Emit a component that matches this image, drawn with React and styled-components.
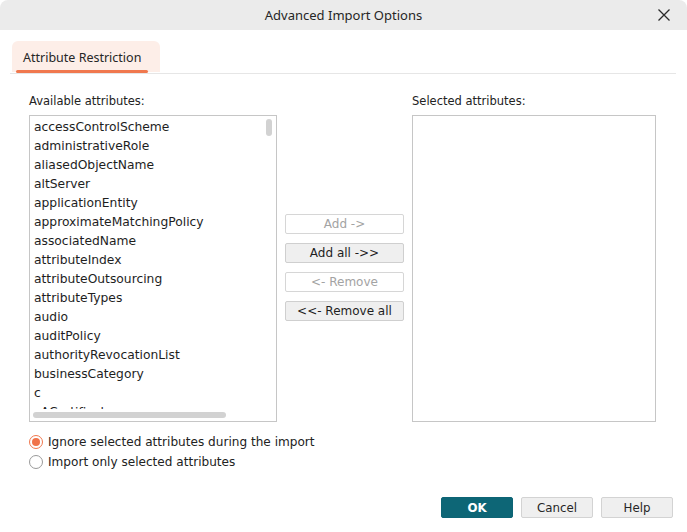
import React from 'react';
import styled, { createGlobalStyle } from 'styled-components';

const GlobalStyle = createGlobalStyle`
  html, body {
    margin: 0;
    padding: 0;
    background: #ffffff;
  }
  body {
    font-family: "DejaVu Sans", sans-serif;
    color: #1f1f1f;
  }
`

const Window = styled.div`
  width: 687px;
  height: 532px;
  display: flex;
  flex-direction: column;
  background: #ffffff;
  box-sizing: border-box;
  overflow: hidden;
  border-radius: 8px 8px 0 0;
`

const TitleBar = styled.div`
  height: 30px;
  flex: none;
  position: relative;
  display: flex;
  align-items: center;
  justify-content: center;
  background: #ebebeb;
  font-family: "Noto Sans", sans-serif;
  font-size: 13px;
  color: #262626;
`

const CloseButton = styled.div`
  position: absolute;
  right: 16px;
  top: 8px;
  width: 14px;
  height: 14px;
  display: flex;
`

const Body = styled.div`
  flex: 1;
  display: flex;
  flex-direction: column;
  padding: 11px 11px 0 10px;
`

const TabStrip = styled.div`
  display: flex;
  border-bottom: 1px solid #e6e6e6;
  height: 32px;
  padding-left: 2px;
`

const Tab = styled.div`
  position: relative;
  width: 148px;
  height: 31px;
  box-sizing: border-box;
  padding: 2px 0 0 11px;
  display: flex;
  align-items: center;
  background: #fdeee8;
  border-radius: 6px 6px 0 0;
  font-family: "Noto Sans", sans-serif;
  font-size: 12.5px;
  color: #262626;

  &::after {
    content: "";
    position: absolute;
    left: 4px;
    right: 12px;
    bottom: -1px;
    height: 3px;
    border-radius: 2px;
    background: #f0784e;
  }
`

const Columns = styled.div`
  display: flex;
  padding: 20px 0 0 19px;
`

const Column = styled.div`
  display: flex;
  flex-direction: column;
  width: ${({ $w }) => $w}px;
`

const Label = styled.div`
  font-size: 11.5px;
  height: 14px;
  line-height: 14px;
  margin-bottom: 7px;
  color: #222;
`

const ListBox = styled.div`
  position: relative;
  height: 307px;
  box-sizing: border-box;
  border: 1px solid #c6c6c6;
  overflow: hidden;
  padding: 2px 0 0 4px;
`

const Item = styled.div`
  height: 19px;
  line-height: 19px;
  font-size: 12.3px;
  color: #1e1e1e;
  white-space: nowrap;
`

const VThumb = styled.div`
  position: absolute;
  right: 4px;
  top: 3px;
  width: 6px;
  height: 17px;
  border-radius: 3px;
  background: #d2d2d2;
`

const HTrack = styled.div`
  position: absolute;
  left: 0;
  right: 0;
  bottom: 0;
  height: 12px;
  background: #ffffff;
`

const HThumb = styled.div`
  position: absolute;
  left: 3px;
  bottom: 3px;
  width: 193px;
  height: 6px;
  border-radius: 3px;
  background: #d2d2d2;
`

const Middle = styled.div`
  width: 135px;
  display: flex;
  flex-direction: column;
  gap: 9px;
  padding: 120px 0 0 8px;
  box-sizing: border-box;
`

const SideButton = styled.button`
  width: 119px;
  height: 20px;
  box-sizing: border-box;
  padding: 0;
  font-family: "DejaVu Sans", sans-serif;
  font-size: 12px;
  border-radius: 2px;
  border: 1px solid ${({ disabled }) => (disabled ? '#d6d6d6' : '#cfcfcf')};
  background: ${({ disabled }) => (disabled ? '#ffffff' : '#efefef')};
  color: ${({ disabled }) => (disabled ? '#a3a3a3' : '#1e1e1e')};
`

const Options = styled.div`
  display: flex;
  flex-direction: column;
  gap: 5px;
  padding: 12px 0 0 19px;
`

const RadioRow = styled.label`
  display: flex;
  align-items: center;
  gap: 5px;
  height: 15px;
  font-size: 12.1px;
  color: #222;
`

const RadioCircle = styled.span`
  width: 14px;
  height: 14px;
  box-sizing: border-box;
  border-radius: 50%;
  border: 1px solid ${({ $on }) => ($on ? '#f0784e' : '#9a9a9a')};
  display: flex;
  align-items: center;
  justify-content: center;
  background: #fff;

  &::after {
    content: "";
    width: 8px;
    height: 8px;
    border-radius: 50%;
    background: ${({ $on }) => ($on ? '#f0734a' : 'transparent')};
  }
`

const Footer = styled.div`
  margin-top: auto;
  display: flex;
  justify-content: flex-end;
  gap: 8px;
  padding: 0 3px 14px 0;
`

const DialogButton = styled.button`
  width: 72px;
  height: 21px;
  padding: 0;
  box-sizing: border-box;
  border-radius: 2px;
  font-family: "DejaVu Sans", sans-serif;
  font-size: 11.8px;
  font-weight: ${({ $primary }) => ($primary ? 700 : 400)};
  border: 1px solid ${({ $primary }) => ($primary ? '#0d6475' : '#d3d3d3')};
  background: ${({ $primary }) => ($primary ? '#0d6676' : '#efefef')};
  color: ${({ $primary }) => ($primary ? '#ffffff' : '#262626')};
`

const attributes = [
  'accessControlScheme',
  'administrativeRole',
  'aliasedObjectName',
  'altServer',
  'applicationEntity',
  'approximateMatchingPolicy',
  'associatedName',
  'attributeIndex',
  'attributeOutsourcing',
  'attributeTypes',
  'audio',
  'auditPolicy',
  'authorityRevocationList',
  'businessCategory',
  'c',
  'cACertificate',
]

const App = () => {
  return (
    <>
      <GlobalStyle />
      <Window>
        <TitleBar>
          Advanced Import Options
          <CloseButton>
            <svg width="14" height="14" viewBox="0 0 14 14">
              <path d="M1.5 1.5 L12.5 12.5 M12.5 1.5 L1.5 12.5" stroke="#2a2a2a" strokeWidth="1.3" />
            </svg>
          </CloseButton>
        </TitleBar>
        <Body>
          <TabStrip>
            <Tab>Attribute Restriction</Tab>
          </TabStrip>
          <Columns>
            <Column $w={248}>
              <Label>Available attributes:</Label>
              <ListBox>
                {attributes.map((a) => (
                  <Item key={a}>{a}</Item>
                ))}
                <VThumb />
                <HTrack />
                <HThumb />
              </ListBox>
            </Column>
            <Middle>
              <SideButton disabled>Add -&gt;</SideButton>
              <SideButton>Add all -&gt;&gt;</SideButton>
              <SideButton disabled>&lt;- Remove</SideButton>
              <SideButton>&lt;&lt;- Remove all</SideButton>
            </Middle>
            <Column $w={244}>
              <Label>Selected attributes:</Label>
              <ListBox />
            </Column>
          </Columns>
          <Options>
            <RadioRow>
              <RadioCircle $on />
              Ignore selected attributes during the import
            </RadioRow>
            <RadioRow>
              <RadioCircle />
              Import only selected attributes
            </RadioRow>
          </Options>
          <Footer>
            <DialogButton $primary>OK</DialogButton>
            <DialogButton>Cancel</DialogButton>
            <DialogButton>Help</DialogButton>
          </Footer>
        </Body>
      </Window>
    </>
  );
}

export default App;
